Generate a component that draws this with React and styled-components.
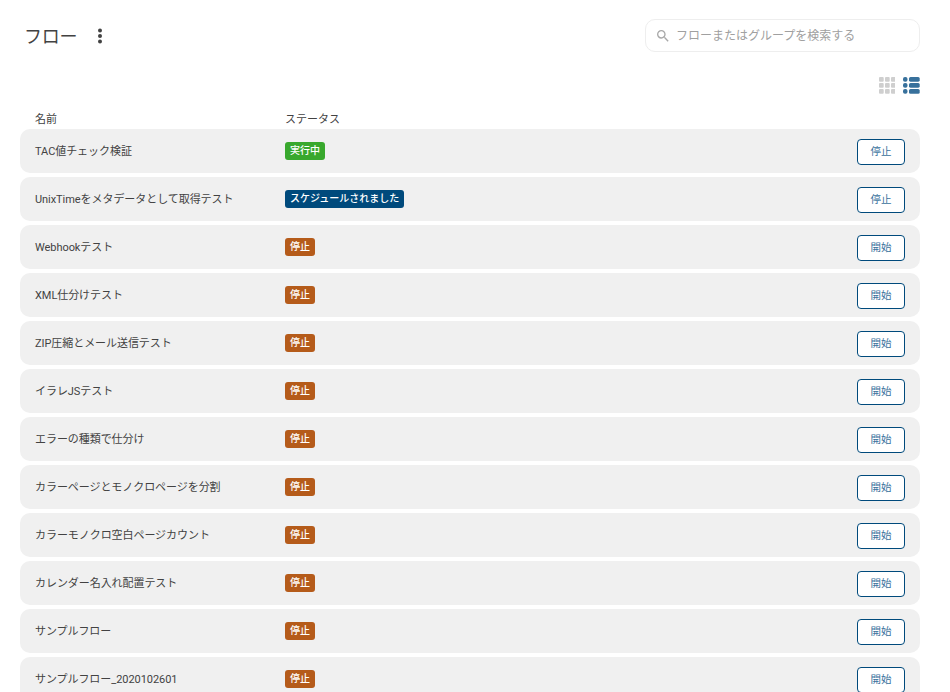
import React from 'react';
import styled, { createGlobalStyle } from 'styled-components';
import { MdSearch } from 'react-icons/md';

const flows = [
  { name: 'TAC値チェック検証', status: 'running' },
  { name: 'UnixTimeをメタデータとして取得テスト', status: 'scheduled' },
  { name: 'Webhookテスト', status: 'stopped' },
  { name: 'XML仕分けテスト', status: 'stopped' },
  { name: 'ZIP圧縮とメール送信テスト', status: 'stopped' },
  { name: 'イラレJSテスト', status: 'stopped' },
  { name: 'エラーの種類で仕分け', status: 'stopped' },
  { name: 'カラーページとモノクロページを分割', status: 'stopped' },
  { name: 'カラーモノクロ空白ページカウント', status: 'stopped' },
  { name: 'カレンダー名入れ配置テスト', status: 'stopped' },
  { name: 'サンプルフロー', status: 'stopped' },
  { name: 'サンプルフロー_2020102601', status: 'stopped' },
];

const statusLabels = {
  running: '実行中',
  scheduled: 'スケジュールされました',
  stopped: '停止',
};

const statusColors = {
  running: '#38a82d',
  scheduled: '#004a7c',
  stopped: '#b55b1a',
};

const GridIcon = () => (
  <svg width="16.7" height="17" viewBox="0 0 16.7 17" fill="#cfcfcf">
    {[0, 6, 12].map((y) =>
      [0, 6, 12].map((x) => <rect key={`${x}-${y}`} x={x} y={y} width="4.7" height="4.7" rx="1" />)
    )}
  </svg>
);

const ListIcon = () => (
  <svg width="16.7" height="17" viewBox="0 0 16.7 17" fill="#38719c">
    {[0, 6, 12].map((y) => (
      <g key={y}>
        <rect x="0" y={y} width="4.5" height="4.7" rx="2" />
        <rect x="6" y={y} width="10.7" height="4.7" rx="1.5" />
      </g>
    ))}
  </svg>
);

const MoreIcon = () => (
  <svg width="6" height="16" viewBox="0 0 6 16" fill="#424242">
    <circle cx="3" cy="2.5" r="2" />
    <circle cx="3" cy="8" r="2" />
    <circle cx="3" cy="13.5" r="2" />
  </svg>
);

const App = () => {
  return (
    <Page>
      <GlobalStyle />
      <Header>
        <TitleGroup>
          <Title>フロー</Title>
          <MoreButton>
            <MoreIcon />
          </MoreButton>
        </TitleGroup>
        <SearchBox>
          <MdSearch size={16} color="#a8a8a8" />
          <SearchInput placeholder="フローまたはグループを検索する" />
        </SearchBox>
      </Header>
      <ViewToggle>
        <GridIcon />
        <ListIcon />
      </ViewToggle>
      <Columns>
        <span>名前</span>
        <span>ステータス</span>
      </Columns>
      <List>
        {flows.map((flow) => (
          <Row key={flow.name}>
            <Name>{flow.name}</Name>
            <BadgeCell>
              <Badge status={flow.status}>{statusLabels[flow.status]}</Badge>
            </BadgeCell>
            <ActionButton>{flow.status === 'stopped' ? '開始' : '停止'}</ActionButton>
          </Row>
        ))}
      </List>
    </Page>
  );
};

export default App;

/**
 * Styled Components
 */

const GlobalStyle = createGlobalStyle`
  html, body {
    margin: 0;
    height: 100%;
    overflow: hidden;
    background: #fff;
  }
  * {
    box-sizing: border-box;
  }
`;

const Page = styled.div`
  padding: 19px 30px 0 20px;
  font-family: Roboto, 'Noto Sans CJK JP', sans-serif;
  color: #424242;
`;

const Header = styled.header`
  display: flex;
  justify-content: space-between;
  align-items: center;
  height: 33px;
`;

const TitleGroup = styled.div`
  display: flex;
  align-items: center;
  padding-left: 4px;
`;

const Title = styled.h1`
  margin: 0;
  padding-top: 2px;
  font-size: 18px;
  font-weight: 400;
  line-height: 33px;
  letter-spacing: -0.3px;
`;

const MoreButton = styled.span`
  display: flex;
  margin-left: 20px;
`;

const SearchBox = styled.div`
  display: flex;
  align-items: center;
  gap: 5px;
  width: 275px;
  height: 33px;
  padding: 0 9px;
  border: 1px solid #eeeeee;
  border-radius: 10px;
`;

const SearchInput = styled.input`
  flex: 1;
  min-width: 0;
  padding: 1px 0 0;
  border: none;
  outline: none;
  background: none;
  font-family: inherit;
  font-size: 12px;
  &::placeholder {
    color: #a0a0a0;
    opacity: 1;
  }
`;

const ViewToggle = styled.div`
  display: flex;
  justify-content: flex-end;
  gap: 8px;
  height: 17px;
  margin-top: 25px;
`;

const Columns = styled.div`
  display: grid;
  grid-template-columns: 250px 1fr;
  align-items: end;
  height: 35px;
  padding: 0 15px 1px;
  font-size: 11px;
  line-height: 16px;
`;

const List = styled.div`
  display: flex;
  flex-direction: column;
  gap: 4px;
`;

const Row = styled.div`
  display: grid;
  grid-template-columns: 250px 1fr 48px;
  align-items: center;
  height: 44px;
  flex-shrink: 0;
  padding: 0 15px;
  background: #f0f0f0;
  border-radius: 10px;
`;

const Name = styled.span`
  padding-top: 2px;
  font-size: 11px;
  line-height: 16px;
  letter-spacing: -0.06px;
`;

const BadgeCell = styled.div`
  display: flex;
  align-items: center;
`;

const Badge = styled.span`
  height: 18px;
  padding: 0 5px;
  border-radius: 3px;
  background: ${(props) => statusColors[props.status]};
  color: #fff;
  font-size: 10px;
  font-weight: 500;
  line-height: 18px;
`;

const ActionButton = styled.button`
  width: 48px;
  height: 26px;
  margin-top: 2px;
  padding: 0;
  border: 1px solid #004a7c;
  border-radius: 4px;
  background: #fff;
  color: #38719c;
  font-family: inherit;
  font-size: 10.5px;
  line-height: 1;
`;
